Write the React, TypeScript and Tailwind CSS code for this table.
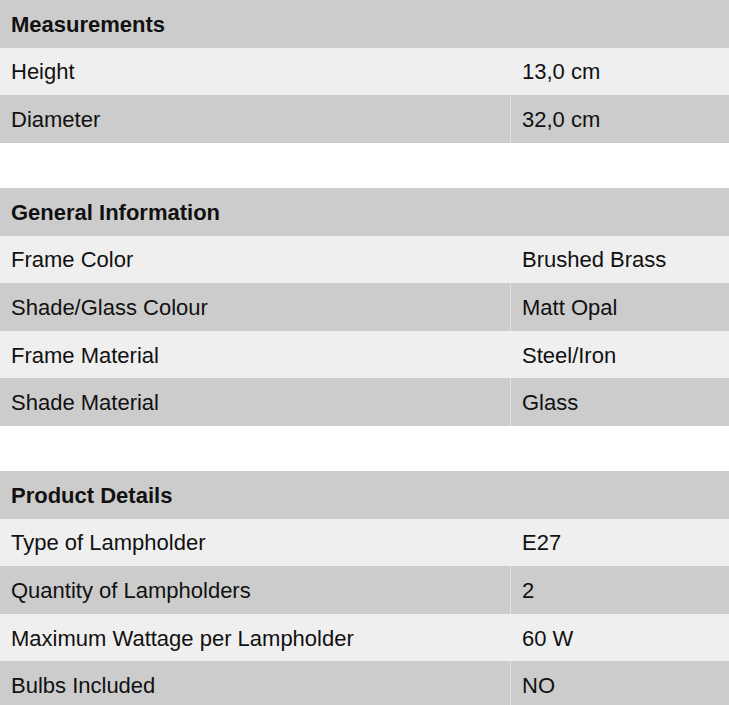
import React from "react";

type Section = { title: string; rows: [string, string][] };

const sections: Section[] = [
  {
    title: "Measurements",
    rows: [
      ["Height", "13,0 cm"],
      ["Diameter", "32,0 cm"],
    ],
  },
  {
    title: "General Information",
    rows: [
      ["Frame Color", "Brushed Brass"],
      ["Shade/Glass Colour", "Matt Opal"],
      ["Frame Material", "Steel/Iron"],
      ["Shade Material", "Glass"],
    ],
  },
  {
    title: "Product Details",
    rows: [
      ["Type of Lampholder", "E27"],
      ["Quantity of Lampholders", "2"],
      ["Maximum Wattage per Lampholder", "60 W"],
      ["Bulbs Included", "NO"],
    ],
  },
];

export default function App() {
  return (
    <div
      className="w-[729px] h-[705px] overflow-hidden bg-white text-[#111111] flex flex-col gap-[45px]"
      style={{ fontFamily: '"Liberation Sans", Arial, sans-serif' }}
    >
      {sections.map((s) => (
        <div key={s.title} className="flex flex-col">
          <div className="h-[47.7px] bg-[#cccccc] flex items-center pl-[11px] pt-[2px] text-[22px] font-bold">
            {s.title}
          </div>
          {s.rows.map(([k, v], i) => (
            <div
              key={k}
              className={
                "h-[47.6px] grid grid-cols-[511px_1fr] text-[22px] " +
                (i % 2 === 0 ? "bg-[#efefef]" : "bg-[#cccccc]")
              }
            >
              <div
                className={
                  "flex items-center pl-[11px] pt-[1px] border-r " +
                  (i % 2 === 0 ? "border-[#efefef]" : "border-[#e2e2e2]")
                }
              >
                {k}
              </div>
              <div className="flex items-center pl-[11px] pt-[1px]">{v}</div>
            </div>
          ))}
        </div>
      ))}
    </div>
  );
}
